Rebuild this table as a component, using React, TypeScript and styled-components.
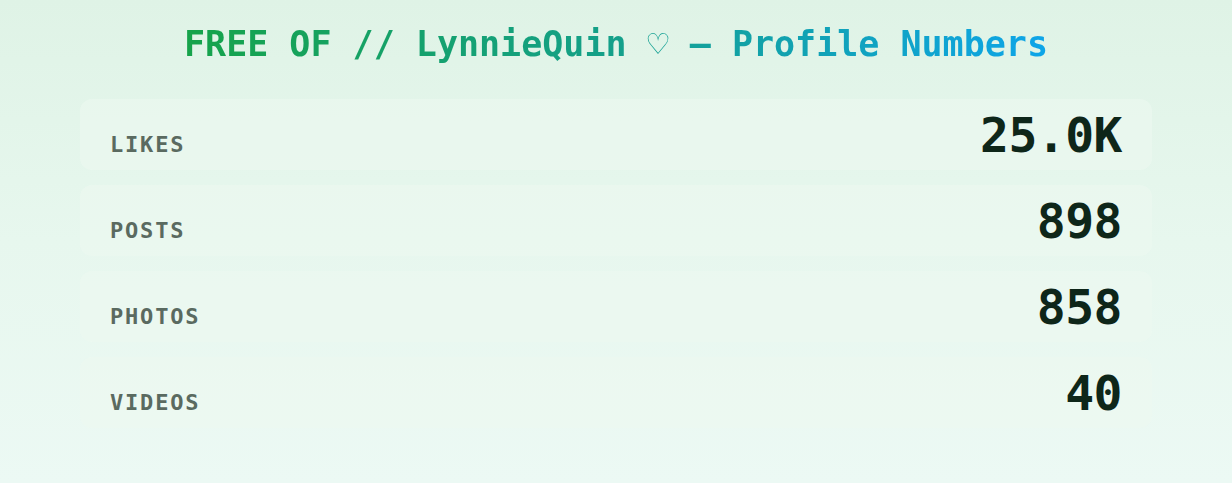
import React from "react";
import styled, { createGlobalStyle } from "styled-components";

const Global = createGlobalStyle`
  html, body { margin: 0; padding: 0; }
  body {
    background: linear-gradient(180deg, #dff3e6 0%, #e7f7ee 50%, #ecf9f4 100%);
    min-height: 483px;
    font-family: "DejaVu Sans Mono", "Liberation Mono", monospace;
  }
`;

const Page = styled.main`
  box-sizing: border-box;
  width: 1232px;
  min-height: 483px;
  padding: 23px 80px 40px;
  display: flex;
  flex-direction: column;
  align-items: stretch;
`;

const Title = styled.h1`
  margin: 0 0 34px;
  font-size: 35px;
  line-height: 42px;
  font-weight: 700;
  text-align: center;
  align-self: center;
  background: linear-gradient(90deg, #16a34a 0%, #14a08a 50%, #0ea5e9 100%);
  -webkit-background-clip: text;
  background-clip: text;
  color: transparent;
`;

const Heart = styled.span`
  font-weight: 400;
`;

const List = styled.div`
  display: flex;
  flex-direction: column;
  gap: 15px;
`;

const Row = styled.div`
  display: flex;
  align-items: baseline;
  justify-content: space-between;
  height: 71px;
  box-sizing: border-box;
  padding: 12px 30px 11px 30px;
  border-radius: 12px;
  background: rgba(236, 248, 240, 0.6);
`;

const Label = styled.span`
  font-size: 22px;
  font-weight: 700;
  letter-spacing: 1.8px;
  color: #5a6a60;
`;

const Value = styled.span`
  font-size: 48px;
  line-height: 48px;
  font-weight: 700;
  color: #0e2619;
  letter-spacing: -0.5px;
`;

const stats = [
  { label: "LIKES", value: "25.0K" },
  { label: "POSTS", value: "898" },
  { label: "PHOTOS", value: "858" },
  { label: "VIDEOS", value: "40" },
];

export default function App() {
  return (
    <>
      <Global />
      <Page>
        <Title>
          FREE OF // LynnieQuin <Heart>♡</Heart> — Profile Numbers
        </Title>
        <List>
          {stats.map((s) => (
            <Row key={s.label}>
              <Label>{s.label}</Label>
              <Value>{s.value}</Value>
            </Row>
          ))}
        </List>
      </Page>
    </>
  );
}
